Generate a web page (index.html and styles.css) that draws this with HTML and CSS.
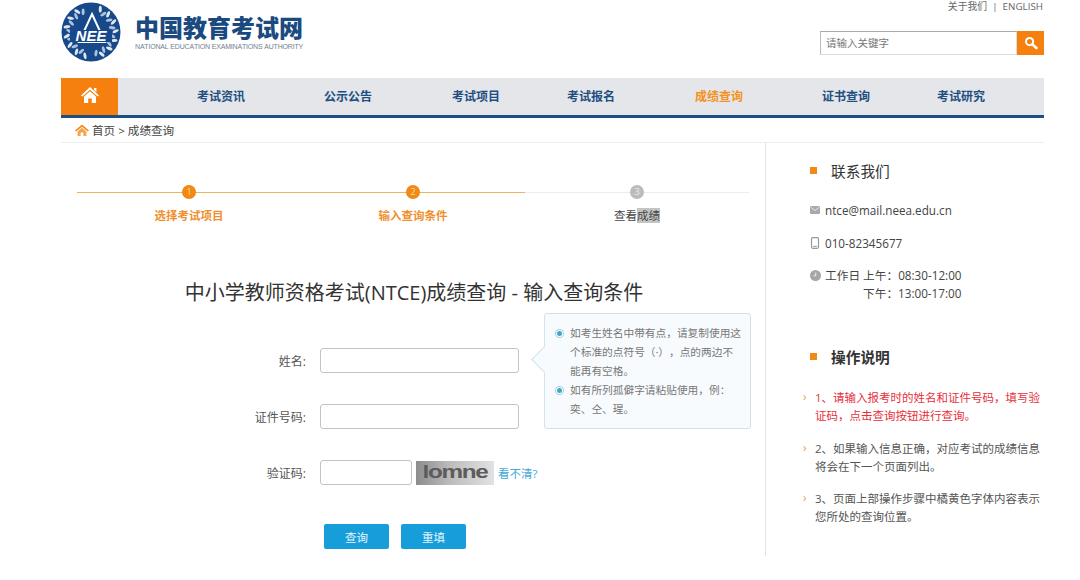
FILE: index.html
```html
<!DOCTYPE html>
<html lang="zh-CN">
<head>
    <meta charset="UTF-8">
    <meta name="viewport" content="width=device-width, initial-scale=1.0">
    <title>中国教育考试网 - 成绩查询</title>
    <link rel="stylesheet" href="styles.css">
</head>
<body>
    <div class="page">
        <!-- 页头 -->
        <header class="header">
            <div class="brand">
                <svg class="brand-logo" width="60" height="60" viewBox="0 0 60 60">
                    <defs>
                        <g id="leaf">
                            <ellipse cx="27.5" cy="5.5" rx="1.5" ry="3.4" fill="#dfe8f2" transform="rotate(-28 27.5 5.5)"/>
                            <ellipse cx="32.5" cy="8.5" rx="1.5" ry="3.4" fill="#aac2da" transform="rotate(28 32.5 8.5)"/>
                        </g>
                    </defs>
                    <circle cx="30" cy="30" r="29.5" fill="#17488a"/>
                    <use href="#leaf" transform="rotate(28 30 30)"/>
                    <use href="#leaf" transform="rotate(50 30 30)"/>
                    <use href="#leaf" transform="rotate(72 30 30)"/>
                    <use href="#leaf" transform="rotate(94 30 30)"/>
                    <use href="#leaf" transform="rotate(116 30 30)"/>
                    <use href="#leaf" transform="rotate(138 30 30)"/>
                    <use href="#leaf" transform="rotate(160 30 30)"/>
                    <use href="#leaf" transform="rotate(200 30 30)"/>
                    <use href="#leaf" transform="rotate(222 30 30)"/>
                    <use href="#leaf" transform="rotate(244 30 30)"/>
                    <use href="#leaf" transform="rotate(266 30 30)"/>
                    <use href="#leaf" transform="rotate(288 30 30)"/>
                    <use href="#leaf" transform="rotate(310 30 30)"/>
                    <use href="#leaf" transform="rotate(332 30 30)"/>
                    <circle cx="30" cy="30" r="18.5" fill="#17488a"/>
                    <path d="M31 12 L44 40 H18 Z" fill="none" stroke="#fff" stroke-width="2"/>
                    <rect x="9" y="28" width="42" height="12" fill="#17488a"/>
                    <text class="logo-text" x="30" y="39" text-anchor="middle">NEE</text>
                </svg>
                <div class="brand-text">
                    <div class="brand-name">中国教育考试网</div>
                    <div class="brand-en">NATIONAL EDUCATION EXAMINATIONS AUTHORITY</div>
                </div>
            </div>
            <div class="header-right">
                <div class="top-links">关于我们 &nbsp;|&nbsp; ENGLISH</div>
                <div class="search">
                    <div class="search-input">请输入关键字</div>
                    <div class="search-btn">
                        <svg width="14" height="14" viewBox="0 0 14 14">
                            <circle cx="5.6" cy="5.6" r="3.6" fill="none" stroke="#fff" stroke-width="2"/>
                            <path d="M8.4 8.4 L12.4 12" stroke="#fff" stroke-width="2.6" stroke-linecap="round"/>
                        </svg>
                    </div>
                </div>
            </div>
        </header>

        <!-- 导航 -->
        <nav class="nav">
            <a class="nav-home">
                <svg width="20" height="18" viewBox="0 0 20 18">
                    <path d="M10 1 L19 9.4 L17.6 10.6 L10 3.8 L2.4 10.6 L1 9.4 Z M14 2 h2.4 v4 L14 4 Z M4 10.4 L10 5.2 L16 10.4 V17 H11.8 V12.4 H8.2 V17 H4 Z" fill="#fff"/>
                </svg>
            </a>
            <div class="nav-items">
                <a>考试资讯</a>
                <a>公示公告</a>
                <a>考试项目</a>
                <a>考试报名</a>
                <a class="active">成绩查询</a>
                <a>证书查询</a>
                <a>考试研究</a>
            </div>
        </nav>

        <div class="crumb">
            <svg width="14" height="12" viewBox="0 0 14 12">
                <path d="M7 0.5 L14 6.4 L12.8 7.4 L7 2.8 L1.2 7.4 L0 6.4 Z" fill="#f08c1a"/>
                <path d="M2.6 7.4 L7 3.8 L11.4 7.4 V12 H8.4 V8.6 H5.6 V12 H2.6 Z" fill="#f5a54a"/>
            </svg>
            <span>首页 &gt; 成绩查询</span>
        </div>

        <div class="main">
            <section class="content">
                <div class="steps">
                    <div class="step done">
                        <span class="step-num">1</span>
                        <span class="step-name">选择考试项目</span>
                    </div>
                    <div class="step done">
                        <span class="step-num">2</span>
                        <span class="step-name">输入查询条件</span>
                    </div>
                    <div class="step">
                        <span class="step-num">3</span>
                        <span class="step-name">查看<mark class="picked">成绩</mark></span>
                    </div>
                </div>

                <h1 class="query-title">中小学教师资格考试(NTCE)成绩查询 - 输入查询条件</h1>

                <form class="query-form">
                    <div class="form-row">
                        <label>姓名:</label>
                        <input class="field" type="text">
                    </div>
                    <div class="form-row">
                        <label>证件号码:</label>
                        <input class="field" type="text">
                    </div>
                    <div class="form-row">
                        <label>验证码:</label>
                        <div class="captcha-row">
                            <input class="field field-short" type="text">
                            <div class="captcha"><span class="captcha-word">lomne</span></div>
                            <a class="captcha-link">看不清?</a>
                        </div>
                    </div>
                    <div class="form-btns">
                        <button type="button" class="btn">查询</button>
                        <button type="button" class="btn">重填</button>
                    </div>

                    <div class="tip">
                        <p class="tip-item">如考生姓名中带有点&#65292;请复制使用这个标准的点符号&#65288;·&#65289;&#65292;点的两边不能再有空格。</p>
                        <p class="tip-item">如有所列孤僻字请粘贴使用&#65292;例&#65306;<br>奕、仝、瑆。</p>
                    </div>
                </form>
            </section>

            <aside class="side">
                <h2 class="side-title">联系我们</h2>
                <div class="contact">
                    <svg width="10" height="8" viewBox="0 0 10 8"><rect width="10" height="8" rx="1" fill="#a9a9a9"/><path d="M0.5 1 L5 4.6 L9.5 1" fill="none" stroke="#eee" stroke-width="0.9"/></svg>
                    <span>ntce@mail.neea.edu.cn</span>
                </div>
                <div class="contact">
                    <svg width="10" height="12" viewBox="0 0 10 12"><rect x="1.5" y="0.7" width="7" height="10.6" rx="1.2" fill="none" stroke="#999" stroke-width="1.2"/><path d="M3 9.4 H7" stroke="#999"/></svg>
                    <span>010-82345677</span>
                </div>
                <div class="contact contact-time">
                    <svg width="11" height="11" viewBox="0 0 11 11"><circle cx="5.5" cy="5.5" r="5.5" fill="#a6a6a6"/><path d="M5.7 2.6 V5.8 H3.4" fill="none" stroke="#e8e8e8" stroke-width="1.1"/></svg>
                    <div class="hours">
                        <span>工作日 上午&#65306;08:30-12:00</span>
                        <span class="hours-pm">下午&#65306;13:00-17:00</span>
                    </div>
                </div>

                <h2 class="side-title side-title-bold">操作说明</h2>
                <ul class="help">
                    <li class="warn">1、请输入报考时的姓名和证件号码&#65292;填写验证码&#65292;点击查询按钮进行查询。</li>
                    <li>2、如果输入信息正确&#65292;对应考试的成绩信息将会在下一个页面列出。</li>
                    <li>3、页面上部操作步骤中橘黄色字体内容表示您所处的查询位置。</li>
                </ul>
            </aside>
        </div>
    </div>
</body>
</html>
```

FILE: styles.css
```css
body {
    margin: 0;
    background: #fff;
    color: #444;
    font-family: "Open Sans", "Noto Sans CJK SC", sans-serif;
    font-size: 11px;
    text-spacing-trim: space-all;
    font-kerning: none;
}

.page {
    width: 983px;
    margin-left: 61px;
}

/* 页头 */
.header {
    height: 78px;
    display: flex;
    justify-content: space-between;
}

.brand {
    display: flex;
    gap: 14px;
    padding-top: 2px;
}

.brand-logo {
    flex: none;
}

.logo-text {
    font-family: "Liberation Sans", sans-serif;
    font-size: 15px;
    font-style: italic;
    font-weight: bold;
    fill: #fff;
}

.brand-text {
    padding-top: 11px;
}

.brand-name {
    font-size: 24px;
    line-height: 29px;
    font-weight: 900;
    color: #1b4a80;
}

.brand-en {
    font-family: "Liberation Sans", sans-serif;
    font-size: 7px;
    line-height: 9px;
    letter-spacing: -0.18px;
    color: #6f7f92;
    white-space: nowrap;
}

.header-right {
    width: 224px;
    display: flex;
    flex-direction: column;
    align-items: flex-end;
}

.top-links {
    font-size: 9.8px;
    line-height: 13px;
    margin-right: 1px;
    color: #666;
}

.search {
    width: 224px;
    height: 24px;
    margin-top: 18px;
    display: flex;
}

.search-input {
    flex: 1;
    box-sizing: border-box;
    padding-left: 5px;
    line-height: 22px;
    font-size: 10.5px;
    color: #777;
    border: 1px solid #ddd;
    border-top-color: #aaa;
    border-left-color: #bbb;
}

.search-btn {
    width: 27px;
    background: #f5800f;
    display: flex;
    align-items: center;
    justify-content: center;
}

/* 导航 */
.nav {
    height: 37px;
    display: flex;
    background: #e4e6ea;
    border-bottom: 3px solid #1d4f84;
}

.nav-home {
    width: 57px;
    background: #f5800f;
    display: flex;
    justify-content: center;
    padding-top: 8px;
    box-sizing: border-box;
}

.nav-items {
    display: grid;
    grid-template-columns: 127px 128px 115px 128px 127px 115px 60px;
    padding: 0 0 2px 79px;
    align-items: center;
    font-size: 12px;
    font-weight: bold;
    color: #1f4f80;
}

.nav-items .active {
    color: #f5911e;
}

.crumb {
    height: 24px;
    padding-left: 14px;
    display: flex;
    align-items: center;
    gap: 3px;
    font-size: 11.6px;
    color: #444;
    border-bottom: 1px solid #eee;
}

/* 主体 */
.main {
    display: flex;
    height: 413px;
}

.content {
    width: 705px;
    box-sizing: border-box;
    padding-top: 42px;
    border-right: 1px solid #e4e4e4;
}

.steps {
    width: 672px;
    margin-left: 16px;
    display: grid;
    grid-template-columns: repeat(3, 1fr);
}

.step {
    display: flex;
    flex-direction: column;
    align-items: center;
    gap: 9px;
    background: linear-gradient(#ececec, #ececec) 0 7px / 100% 1px no-repeat;
    color: #444;
    font-size: 11.5px;
    line-height: 15px;
}

.step.done {
    background-image: linear-gradient(#f2b25c, #f2b25c);
    color: #ef8f2d;
    font-weight: bold;
}

.step-num {
    width: 14px;
    height: 14px;
    border-radius: 50%;
    background: #bcbcbc;
    color: #eee;
    font-size: 9px;
    font-weight: normal;
    line-height: 14px;
    text-align: center;
}

.step.done .step-num {
    background: #f08a14;
    color: #ffd9a8;
}

.picked {
    background: #c4c4c4;
    color: #444;
}

.query-title {
    margin: 55px 0 0;
    padding-left: 2px;
    text-align: center;
    font-size: 20px;
    line-height: 30px;
    font-weight: normal;
    color: #333;
}

.query-form {
    position: relative;
    margin-top: 40px;
    display: flex;
    flex-direction: column;
    gap: 31px;
}

.form-row {
    display: flex;
    align-items: center;
    height: 25px;
}

.form-row label {
    width: 245px;
    text-align: right;
    margin-right: 14px;
    font-size: 12px;
    color: #555;
}

.field {
    width: 199px;
    height: 25px;
    box-sizing: border-box;
    padding: 0 4px;
    border: 1px solid #c4c4c4;
    border-radius: 3px;
    background: #fff;
}

.field-short {
    width: 92px;
}

.captcha-row {
    display: flex;
    align-items: center;
}

.captcha {
    width: 78px;
    height: 24px;
    margin-left: 4px;
    background: linear-gradient(90deg, #8d8d8d, #bdbdbd 45%, #e2e2e2);
    display: flex;
    align-items: center;
    justify-content: center;
    overflow: hidden;
}

.captcha-word {
    font-family: "Liberation Sans", sans-serif;
    font-size: 18px;
    font-weight: bold;
    letter-spacing: -1px;
    color: #5c5c5c;
    transform: scaleX(1.35);
}

.captcha-link {
    margin-left: 4px;
    font-size: 11.5px;
    color: #3fa9d8;
}

.form-btns {
    display: flex;
    gap: 12px;
    margin: 8px 0 0 263px;
}

.btn {
    width: 65px;
    height: 25px;
    padding: 0;
    border: none;
    border-radius: 2px;
    background: #189ddb;
    color: #e8f6fc;
    font-family: inherit;
    font-size: 11.5px;
}

/* 提示框 */
.tip {
    position: absolute;
    left: 483px;
    top: -35px;
    width: 207px;
    height: 116px;
    box-sizing: border-box;
    padding: 10px 8px 0 25px;
    background: #f7fbfe;
    border: 1px solid #cfe2ee;
    border-radius: 3px;
    font-size: 10.7px;
    line-height: 19px;
    color: #777;
}

.tip::before {
    content: "";
    position: absolute;
    left: -10px;
    top: 36px;
    width: 18px;
    height: 18px;
    background: #f7fbfe;
    border-left: 1px solid #cfe2ee;
    border-bottom: 1px solid #cfe2ee;
    transform: rotate(45deg);
}

.tip-item {
    position: relative;
    margin: 0;
}

.tip-item::before {
    content: "";
    position: absolute;
    left: -13px;
    top: 7px;
    width: 5px;
    height: 5px;
    border-radius: 50%;
    background: #42a5c9;
    box-shadow: 0 0 0 1px #fff, 0 0 0 2px #9fd0e2;
}

/* 右栏 */
.side {
    flex: 1;
    padding-left: 44px;
    min-width: 0;
}

.side-title {
    margin: 17px 0 19px;
    padding-left: 21px;
    position: relative;
    font-size: 14.7px;
    line-height: 22px;
    font-weight: normal;
    color: #333;
}

.side-title::before {
    content: "";
    position: absolute;
    left: 0;
    top: 7px;
    width: 7px;
    height: 7px;
    background: #f08a14;
}

.side-title-bold {
    margin: 44px 0 21px;
    font-weight: bold;
}

.contact {
    display: flex;
    align-items: center;
    gap: 5px;
    height: 18px;
    margin-bottom: 14.5px;
    font-size: 11.7px;
    color: #444;
}

.contact-time {
    align-items: flex-start;
    height: 36px;
    margin-bottom: 0;
    line-height: 18px;
}

.contact-time svg {
    margin: 4px -1px 0 0;
}

.hours {
    display: flex;
    flex-direction: column;
}

.hours-pm {
    padding-left: 38px;
}

.help {
    list-style: none;
    margin: 0 0 0 -7px;
    padding: 0;
    width: 242px;
    font-size: 11.5px;
    line-height: 18px;
    color: #555;
}

.help li {
    position: relative;
    padding-left: 12px;
    margin-bottom: 14.5px;
}

.help li::before {
    content: "›";
    position: absolute;
    left: 0;
    top: -1px;
    color: #f0a040;
    font-size: 12px;
}

.help .warn {
    color: #e8303a;
}
```
